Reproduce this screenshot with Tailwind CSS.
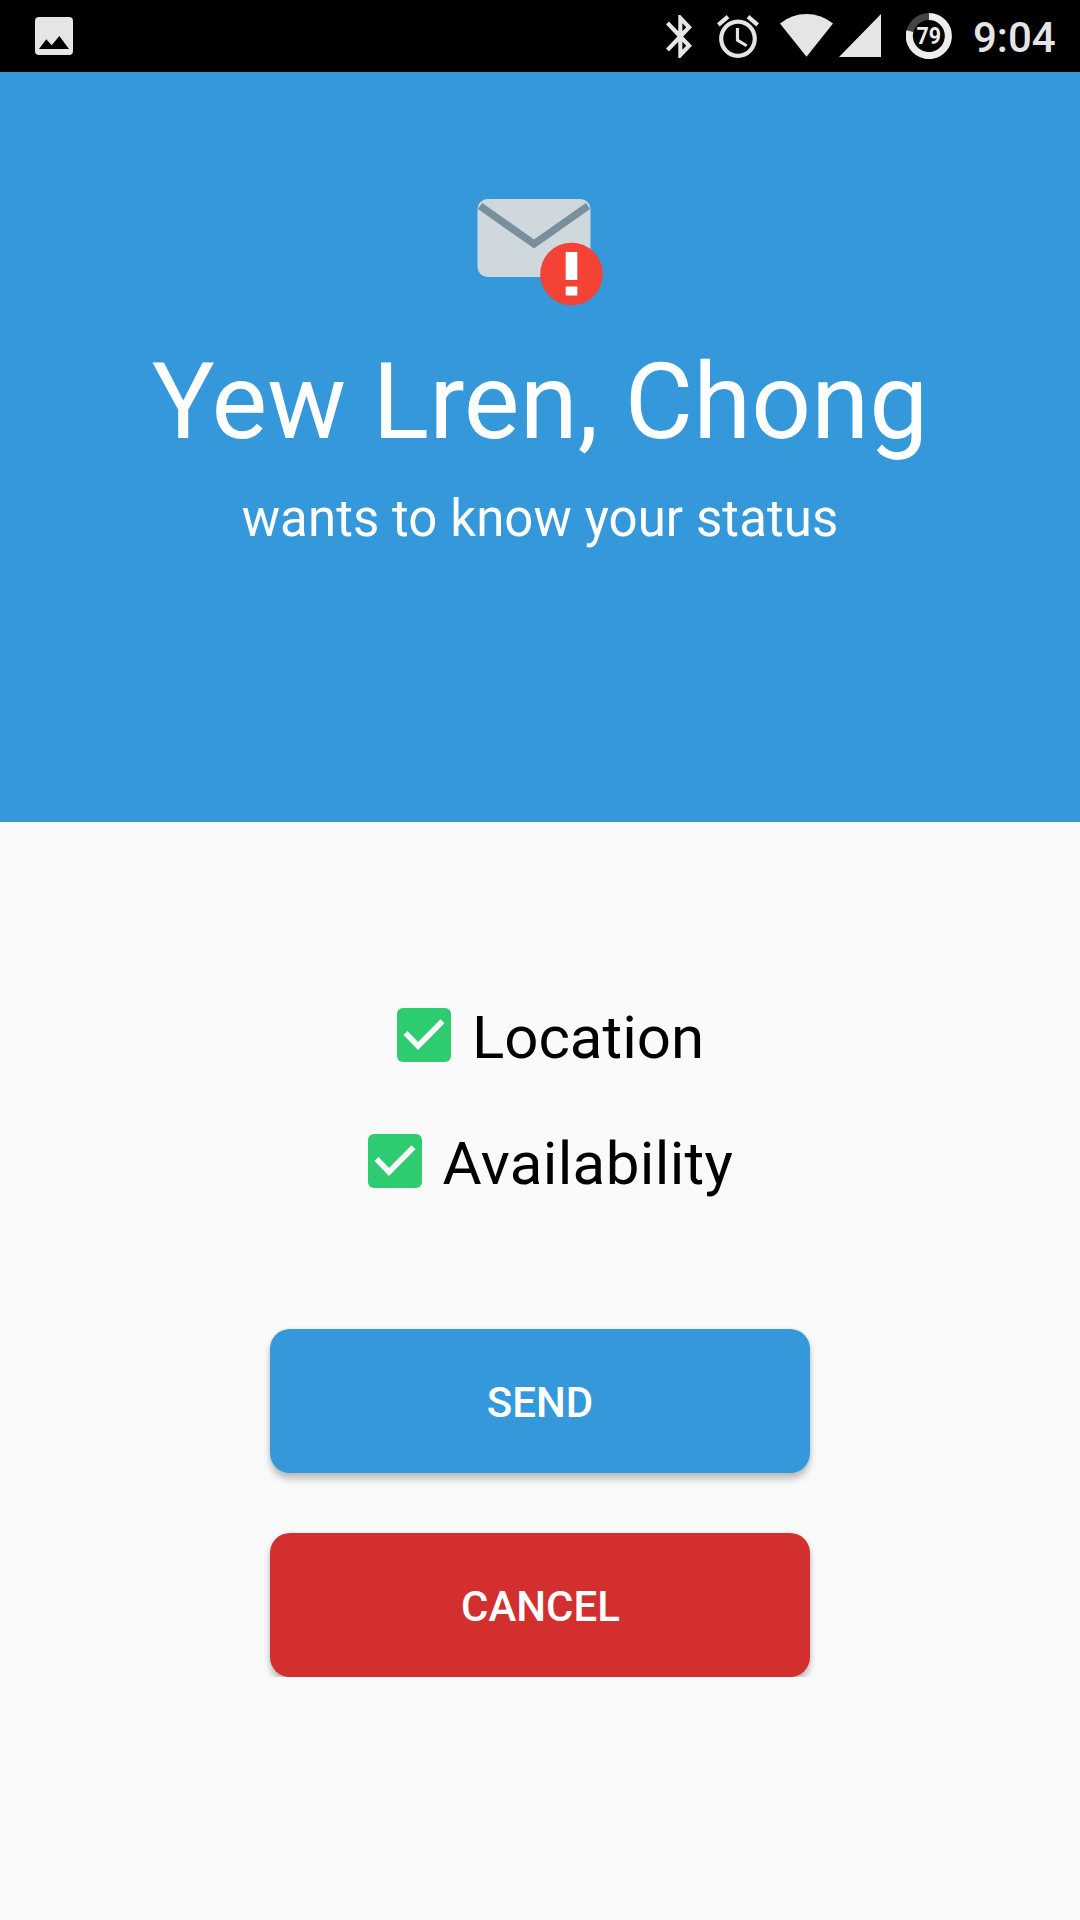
<!DOCTYPE html>
<html lang="en">
<head>
<meta charset="utf-8">
<title>Status request</title>
<script src="https://cdn.jsdelivr.net/npm/@tailwindcss/browser@4"></script>
</head>
<body class="bg-[#fafafa] font-['Roboto',sans-serif]">
<div class="flex h-[1920px] w-[1080px] flex-col overflow-hidden">
  <!-- Status bar -->
  <div class="flex h-[72px] items-start bg-black text-[#e5e5e5]">
    <svg class="mt-[17px] ml-[35px] h-[38px] w-[38px]" viewBox="0 0 38 38"><rect width="38" height="38" rx="4" fill="currentColor"/><path d="M4 32L11.3 22.3L16.7 28.3L24.3 19L34 32Z" fill="#000"/></svg>
    <svg class="mt-[15px] ml-[593px] h-[43px] w-[26px]" viewBox="5 2 12.71 20" preserveAspectRatio="none" fill="currentColor"><path d="M17.71 7.71L12 2h-1v7.59L6.41 5 5 6.41 10.59 12 5 17.59 6.41 19 11 14.41V22h1l5.71-5.71-4.3-4.29 4.3-4.29zM13 5.83l1.88 1.88L13 9.59V5.83zm1.88 10.46L13 18.17v-3.76l1.88 1.88z"/></svg>
    <svg class="mt-[15px] ml-[25px] h-[43px] w-[42px]" viewBox="2 1.86 20 20.14" preserveAspectRatio="none" fill="currentColor"><path d="M22 5.72l-4.6-3.86-1.29 1.53 4.6 3.86L22 5.72zM7.88 3.39L6.6 1.86 2 5.71l1.29 1.53 4.59-3.85zM12.5 8H11v6l4.75 2.85.75-1.23-4-2.37V8zM12 4c-4.97 0-9 4.03-9 9s4.02 9 9 9c4.97 0 9-4.03 9-9s-4.03-9-9-9zm0 16c-3.87 0-7-3.13-7-7s3.13-7 7-7 7 3.13 7 7-3.13 7-7 7z"/></svg>
    <svg class="mt-[14px] ml-[21px] h-[43px] w-[53px]" viewBox="0 0 53 43" fill="currentColor"><path d="M0 9.5Q11.5 0 26.5 0T53 9.5L26.5 42.7Z"/></svg>
    <svg class="mt-[14px] ml-[6px] h-[43px] w-[42px]" viewBox="0 0 42 43" fill="currentColor"><path d="M0 43L42 0V43Z"/></svg>
    <svg class="mt-[13px] ml-[25px] h-[46px] w-[46px]" viewBox="0 0 46 46"><circle cx="23" cy="23" r="19.5" fill="none" stroke="#444" stroke-width="7"/><path d="M23 3.5A19.5 19.5 0 1 1 3.9 18.2" fill="none" stroke="#ececec" stroke-width="7"/><text x="22.7" y="31" text-anchor="middle" textLength="24.5" lengthAdjust="spacingAndGlyphs" font-size="24" font-weight="700" fill="#ececec">79</text></svg>
    <span class="mt-[13px] ml-[21px] text-[42px] leading-[49px] font-medium">9:04</span>
  </div>

  <!-- Requester -->
  <header class="flex h-[750px] flex-col items-center bg-[#3598db] text-white">
    <svg class="mt-[127px] h-[107px] w-[126px]" viewBox="0 0 126 107"><rect x="0.5" y="0" width="113" height="78" rx="10" fill="#cfd8dd"/><path d="M3 7L57 45L111 7" fill="none" stroke="#78909c" stroke-width="7.5"/><circle cx="94.5" cy="75" r="31.3" fill="#f44336"/><path d="M88.7 53h11.6v28h-11.6zM88.7 87.5h11.6v9h-11.6z" fill="#fff"/></svg>
    <h1 class="mt-[35px] text-[105px] leading-[123px] tracking-[0.12px] whitespace-nowrap">Yew Lren, Chong</h1>
    <p class="mt-[25px] text-[51px] leading-[60px] tracking-[0.08px] whitespace-nowrap">wants to know your status</p>
  </header>

  <!-- Reply options -->
  <main class="flex flex-1 flex-col items-center pt-[150px] text-black">
    <label class="flex h-[126px] items-center">
      <svg class="mx-[21px] h-[54px] w-[54px]" viewBox="0 0 54 54"><rect width="54" height="54" rx="6" fill="#2ecc71"/><path d="M8.5 25L21 38L45.5 13.2" fill="none" stroke="#fafafa" stroke-width="5.6"/></svg>
      <span class="pt-[5px] text-[60px] leading-[71px]">Location</span>
    </label>
    <label class="flex h-[126px] items-center">
      <svg class="mx-[21px] h-[54px] w-[54px]" viewBox="0 0 54 54"><rect width="54" height="54" rx="6" fill="#2ecc71"/><path d="M8.5 25L21 38L45.5 13.2" fill="none" stroke="#fafafa" stroke-width="5.6"/></svg>
      <span class="pt-[5px] text-[60px] leading-[71px] tracking-[0.38px]">Availability</span>
    </label>
    <!-- The column ends at the last button, which cuts off its shadow -->
    <div class="mt-[85px] flex w-[580px] flex-col items-center gap-[60px] overflow-hidden px-5 pt-5">
      <button class="h-[144px] w-[540px] shrink-0 rounded-[20px] bg-[#3598db] pt-[2px] text-[42px] leading-[49px] font-medium text-white shadow-[0_6px_7px_rgba(0,0,0,0.24),0_0_4px_rgba(0,0,0,0.08)]">SEND</button>
      <button class="h-[144px] w-[540px] shrink-0 rounded-[20px] bg-[#d32f2f] pt-[2px] pl-px text-[42px] leading-[49px] font-medium text-white shadow-[0_6px_7px_rgba(0,0,0,0.24),0_0_4px_rgba(0,0,0,0.08)]">CANCEL</button>
    </div>
  </main>
</div>
</body>
</html>
